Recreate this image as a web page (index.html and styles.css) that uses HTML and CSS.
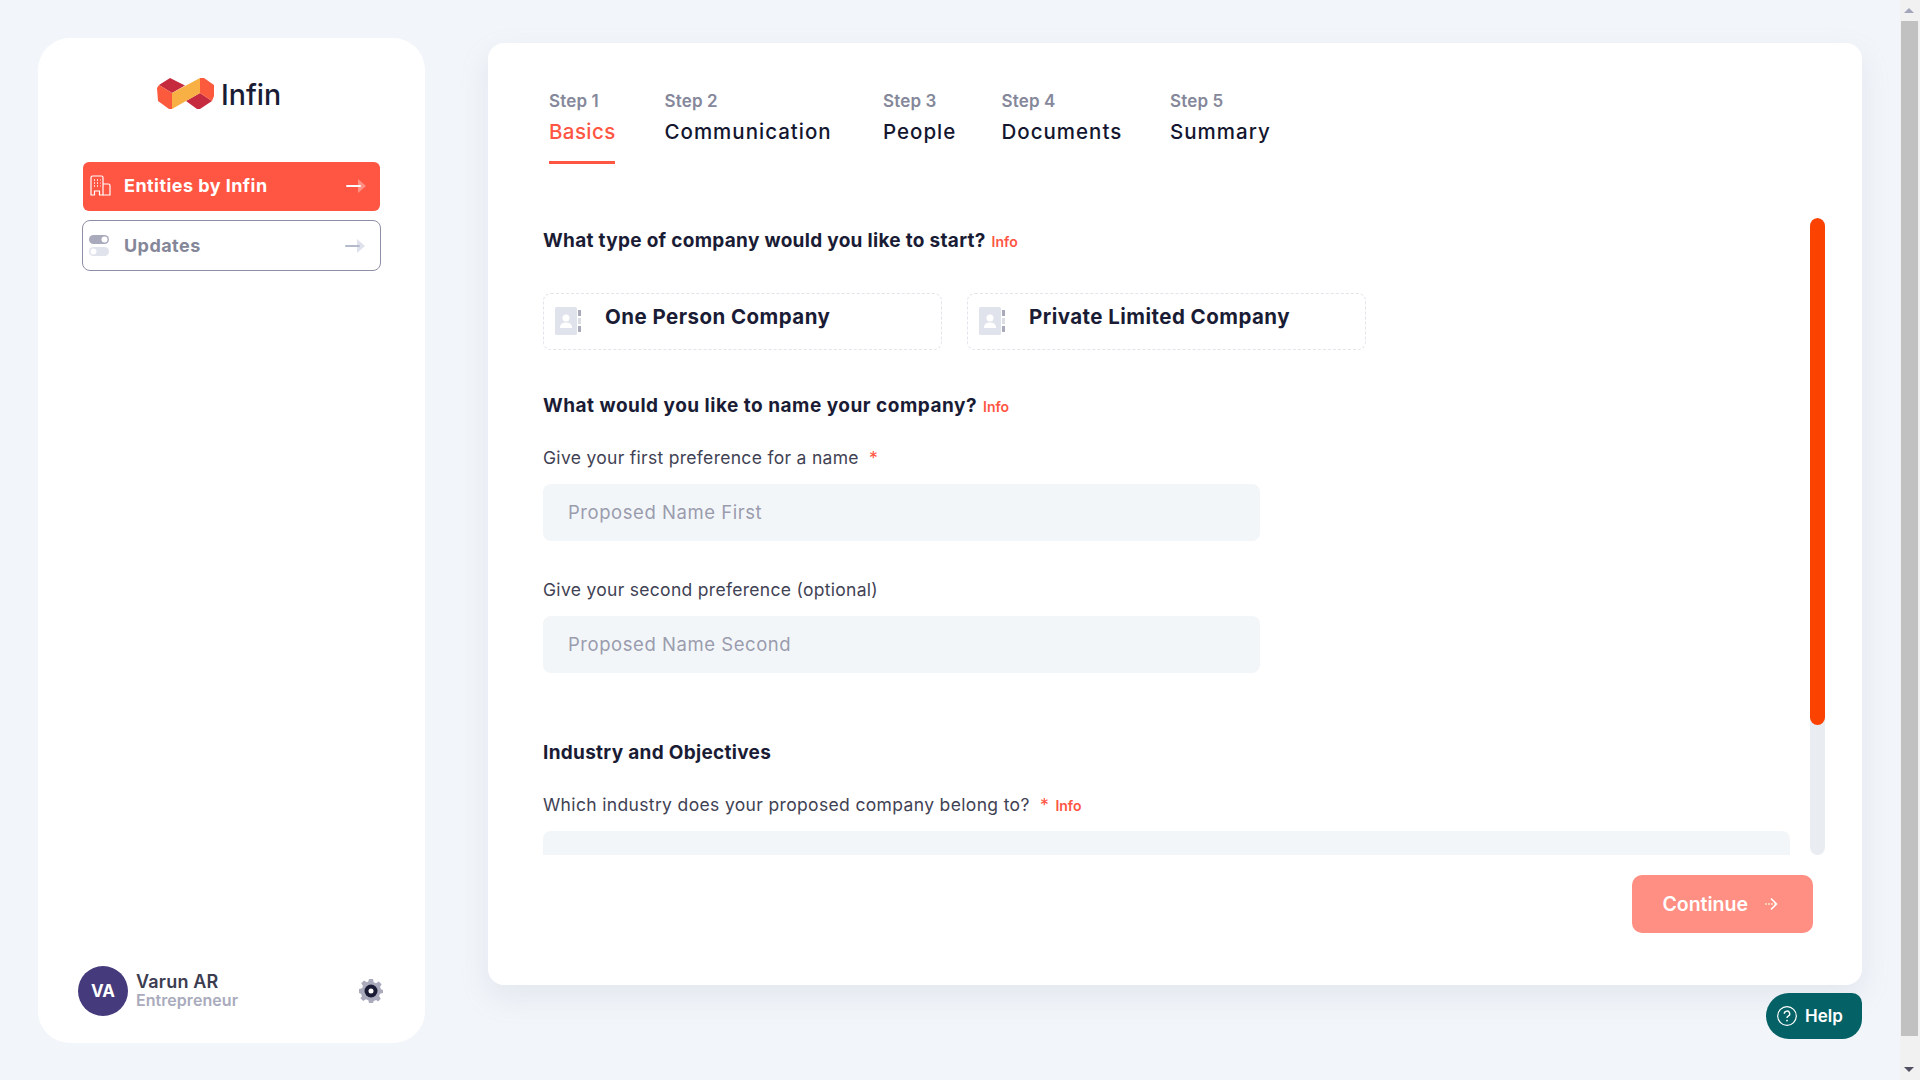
FILE: index.html
```html
<!DOCTYPE html>
<html lang="en">
<head>
<meta charset="utf-8">
<title>Infin</title>
<link rel="stylesheet" href="styles.css">
</head>
<body>
<div class="page">
  <aside class="sidebar">
    <div class="logo">
      <svg class="logo-mark" viewBox="0 0 57 31" width="57" height="31">
        <polygon fill="#c62a3f" points="2,7 13,0 28,7.5 15,15"/>
        <polygon fill="#fb5a3c" points="0,10 2,7 15,15 15,31 12,31 1,23"/>
        <polygon fill="#c62a3f" points="29,23 43,15 55,23 43,31 40,31"/>
        <polygon fill="#f8af43" points="15,15 43,0 43,15 15,31"/>
        <polygon fill="#fb5a3c" points="43,0 47,0 57,7 57,18 55,23 43,15"/>
      </svg>
      <span class="logo-text">Infin</span>
    </div>
    <nav class="nav">
      <a class="nav-item active">
        <svg class="nav-icon" viewBox="0 0 21 21" width="21" height="21" fill="none" stroke="#fff" stroke-width="1.2">
          <path d="M1 20V2.5A1.5 1.5 0 0 1 2.500 1h9A1.500 1.500 0 0 1 13 2.500V20h-3.500v-4h-5v4z"/>
          <path d="M13 9h5.500A1.500 1.500 0 0 1 20 10.500V20h-7"/>
          <path d="M4 5h1M7 5h1M10 5h.5M4 8h1M7 8h1M10 8h.5M4 11h1M7 11h1M10 11h.5" stroke-width="1.500"/>
        </svg>
        <span class="nav-label">Entities by Infin</span>
        <svg class="nav-arrow" viewBox="0 0 20 16" width="20" height="16">
          <path d="M12 1l8 7-8 7z" fill="#fff" opacity=".35"/>
          <rect x="0" y="7" width="15" height="2" rx="1" fill="#fff"/>
        </svg>
      </a>
      <a class="nav-item">
        <svg class="nav-icon" viewBox="0 0 21 21" width="21" height="21">
          <rect x="0" y="0" width="20" height="9" rx="4.500" fill="#a9abbd"/>
          <circle cx="15.500" cy="4.500" r="3" fill="#fff"/>
          <rect x="0" y="12" width="20" height="9" rx="4.500" fill="#e1e3ec"/>
          <circle cx="4.500" cy="16.500" r="3" fill="#fff"/>
        </svg>
        <span class="nav-label">Updates</span>
        <svg class="nav-arrow" viewBox="0 0 20 16" width="20" height="16">
          <path d="M12 1l8 7-8 7z" fill="#dfe2ec"/>
          <rect x="0" y="7" width="15" height="2" rx="1" fill="#b5b9cc"/>
        </svg>
      </a>
    </nav>
    <div class="user">
      <div class="avatar">VA</div>
      <div class="user-text">
        <div class="user-name">Varun AR</div>
        <div class="user-role">Entrepreneur</div>
      </div>
      <svg class="gear" viewBox="0 0 24 24" width="24" height="24">
        <path fill="#a9abbd" d="M10 0h4l.7 3.200 2.300 1 2.800-1.800 2.800 2.800L21 8l1 2.300 2 .7v3l-3 .7-1 2.300 1.800 2.800-2.800 2.800L17.200 21l-2.500 1-.7 2h-4l-.7-2.800-2.300-1-2.800 1.800-2.800-2.800L3 17.200 2 14.700 0 14v-4l3-.7 1-2.300-1.800-2.800L5 1.400 7.800 3.200l1.500-.6z"/>
        <circle cx="12" cy="12" r="6.500" fill="#1a1c35"/>
        <circle cx="12" cy="12" r="2.500" fill="#fff"/>
      </svg>
    </div>
  </aside>

  <main class="panel">
    <div class="tabs">
      <div class="tab current"><span class="tab-step">Step 1</span><span class="tab-name">Basics</span></div>
      <div class="tab"><span class="tab-step">Step 2</span><span class="tab-name">Communication</span></div>
      <div class="tab"><span class="tab-step">Step 3</span><span class="tab-name">People</span></div>
      <div class="tab"><span class="tab-step">Step 4</span><span class="tab-name">Documents</span></div>
      <div class="tab"><span class="tab-step">Step 5</span><span class="tab-name">Summary</span></div>
    </div>

    <div class="form-area">
      <form class="form">
        <h2 class="heading first">What type of company would you like to start? <span class="info">Info</span></h2>
        <div class="choices">
          <div class="choice">
            <svg class="choice-icon" viewBox="0 0 26 28" width="26" height="28">
              <rect x="0" y="0" width="22" height="28" rx="1.500" fill="#e1e3ec"/>
              <circle cx="11" cy="11" r="3.500" fill="#fff"/>
              <path d="M5 21c0-4 2.500-5.500 6-5.500s6 1.500 6 5.500z" fill="#fff"/>
              <rect x="23" y="3" width="3" height="6" fill="#a9abbd"/>
              <rect x="23" y="11" width="3" height="6" fill="#dcdee6"/>
              <rect x="23" y="19" width="3" height="6" fill="#a9abbd"/>
            </svg>
            <span class="choice-label">One Person Company</span>
          </div>
          <div class="choice">
            <svg class="choice-icon" viewBox="0 0 26 28" width="26" height="28">
              <rect x="0" y="0" width="22" height="28" rx="1.500" fill="#e1e3ec"/>
              <circle cx="11" cy="11" r="3.500" fill="#fff"/>
              <path d="M5 21c0-4 2.500-5.500 6-5.500s6 1.500 6 5.500z" fill="#fff"/>
              <rect x="23" y="3" width="3" height="6" fill="#a9abbd"/>
              <rect x="23" y="11" width="3" height="6" fill="#dcdee6"/>
              <rect x="23" y="19" width="3" height="6" fill="#a9abbd"/>
            </svg>
            <span class="choice-label">Private Limited Company</span>
          </div>
        </div>
        <h2 class="heading name">What would you like to name your company? <span class="info">Info</span></h2>
        <label class="label first-label">Give your first preference for a name <span class="req">*</span></label>
        <input class="input" type="text" placeholder="Proposed Name First">
        <label class="label second-label">Give your second preference (optional)</label>
        <input class="input" type="text" placeholder="Proposed Name Second">
        <h2 class="heading industry">Industry and Objectives</h2>
        <label class="label industry-label">Which industry does your proposed company belong to? <span class="req">*</span> <span class="info">Info</span></label>
        <div class="select"></div>
      </form>
      <div class="track"><div class="thumb"></div></div>
    </div>

    <div class="actions">
      <button class="continue" type="button">Continue
        <svg viewBox="0 0 14 14" width="14" height="14" fill="none" stroke="#fff" stroke-width="1.600">
          <path d="M1 7h11" stroke="#ffe3c9" stroke-dasharray="2 1"/>
          <path d="M7 1.500L12.500 7 7 12.500"/>
        </svg>
      </button>
    </div>
  </main>

  <div class="scrollbar">
    <div class="sb-btn"><span class="sb-up"></span></div>
    <div class="sb-thumb"></div>
    <div class="sb-rest"></div>
    <div class="sb-btn"><span class="sb-down"></span></div>
  </div>

  <button class="help" type="button">
    <svg viewBox="0 0 20 20" width="20" height="20" fill="none" stroke="#fff" stroke-width="1.200">
      <circle cx="10" cy="10" r="9.300"/>
      <path d="M7.300 7.800a2.700 2.700 0 1 1 3.900 2.400c-.8.400-1.200.9-1.200 1.800" stroke-width="1.400"/>
      <circle cx="10" cy="14.600" r=".9" fill="#fff" stroke="none"/>
    </svg>
    Help
  </button>
</div>
</body>
</html>
```
FILE: styles.css
```css
* { box-sizing: border-box; }
html, body { margin: 0; padding: 0; height: 100%; overflow: hidden; }
body { background: #f2f5f9; font-family: Inter, "Liberation Sans", sans-serif; color: #1a1c35; }
.page { position: relative; display: flex; align-items: flex-start; width: 1920px; height: 1080px; }

/* Sidebar */
.sidebar {
  display: flex; flex-direction: column;
  width: 387px; height: 1005px; margin: 38px 0 0 38px;
  padding: 40px 42px 27px 40px;
  background: #fff; border-radius: 32px;
}
.logo { display: flex; align-items: center; gap: 7px; padding-left: 79px; height: 31px; }
.logo-text { padding-top: 2px; font-size: 28.500px; font-weight: 500; }
.nav { display: flex; flex-direction: column; gap: 9px; margin-top: 53px; padding-left: 4px; width: 303px; }
.nav-item {
  display: flex; align-items: center; height: 51px; padding: 0 15px 0 6px;
  border: 1px solid #8d8fa5; border-radius: 8px; color: #858799;
  font-size: 18px; font-weight: 700; letter-spacing: .45px;
}
.nav-item.active { height: 49px; margin: 0 1px; padding: 0 14px 2px 7px; background: #ff5543; border: 0; border-radius: 6px; color: #fff; }
.nav-icon { flex: none; }
.nav-label { flex: 1; margin-left: 14px; }
.nav-item.active .nav-label { margin-left: 13px; }
.user { display: flex; align-items: center; margin-top: auto; }
.avatar {
  display: flex; align-items: center; justify-content: center; flex: none;
  width: 50px; height: 50px; border-radius: 50%;
  background: #443a7c; color: #fff; font-size: 17px; font-weight: 700;
}
.user-text { flex: 1; margin-left: 8px; }
.user-name { font-size: 18px; line-height: 18px; font-weight: 600; letter-spacing: .2px; color: #3c3d50; }
.user-role { font-size: 16px; line-height: 18px; font-weight: 600; letter-spacing: .05px; color: #a9abbd; }
.gear { flex: none; }

/* Main panel */
.panel {
  width: 1374px; height: 942px; margin: 43px 0 0 63px;
  padding: 47px 37px 0 55px;
  background: #fff; border-radius: 16px;
  box-shadow: 0 12px 28px rgba(160, 170, 200, .18);
}
.tabs {
  display: grid; grid-template-columns: 66px 169px 69px 119px 103px; column-gap: 49.500px;
  margin-left: 6px; width: max-content;
}
.tab { display: flex; flex-direction: column; height: 74px; }
.tab-step { font-size: 17px; line-height: 22px; font-weight: 600; letter-spacing: .15px; color: #85879a; }
.tab-name { margin-top: 5px; font-size: 20.500px; line-height: 30px; font-weight: 500; letter-spacing: 1px; white-space: nowrap; color: #14162f; }
.tab.current { border-bottom: 3px solid #ff5543; }
.tab.current .tab-name { color: #ff5543; letter-spacing: .4px; }

.form-area { display: flex; gap: 20px; height: 637px; margin-top: 54px; }
.form { flex: 1; min-width: 0; height: 637px; padding-top: 10px; overflow: hidden; }
.heading { margin: 0; font-size: 19px; line-height: 26px; font-weight: 700; letter-spacing: .3px; color: #1a1c35; }
.info { font-size: 14px; font-weight: 600; letter-spacing: 0; color: #ff5543; margin-left: 1px; }
.choices { display: flex; gap: 25px; margin-top: 38px; }
.choice {
  display: flex; align-items: flex-start; width: 399px; height: 57px;
  padding: 13px 0 0 11px;
  border: 1px dashed #e2e4ea; border-radius: 8px;
}
.choice-icon { flex: none; }
.choice-label { margin-left: 24px; margin-top: -3px; font-size: 20.500px; line-height: 26px; font-weight: 700; letter-spacing: .45px; }
.heading.name { margin-top: 43px; letter-spacing: .5px; }
.heading.industry { margin-top: 67px; letter-spacing: .3px; }
.label { display: block; font-size: 17.500px; line-height: 26px; letter-spacing: .3px; color: #3f4254; font-weight: 400; }
.first-label { margin-top: 25px; }
.second-label { margin-top: 36px; }
.industry-label { margin-top: 26px; letter-spacing: .35px; }
.req { color: #ff5543; margin-left: 5px; }
.input {
  display: block; width: 717px; height: 57px; margin-top: 13px; padding: 0 25px 1px;
  background: #f3f6f9; border: 0; border-radius: 8px; outline: 0;
  font: 400 18.500px Inter, "Liberation Sans", sans-serif; letter-spacing: .55px; color: #1a1c35;
}
.input::placeholder { color: #9a9cae; opacity: 1; }
.select { height: 56px; margin-top: 12px; background: #f3f6f9; border-radius: 8px; }
.track { flex: none; width: 15px; height: 637px; background: #e9edf2; border-radius: 8px; overflow: hidden; }
.thumb { height: 507px; background: #fb4200; border-radius: 8px; }

.actions { display: flex; justify-content: flex-end; margin-top: 20px; padding-right: 12px; }
.continue {
  display: flex; align-items: center; gap: 16px; height: 58px; padding: 0 35px 0 30px;
  background: #ff8e83; border: 0; border-radius: 10px; color: #fff;
  font: 600 19.500px Inter, "Liberation Sans", sans-serif;
}

/* Window scrollbar */
.scrollbar { display: flex; flex-direction: column; flex: none; width: 20px; height: 1080px; margin-left: 38px; background: #f1f1f1; }
.sb-btn { display: flex; align-items: center; justify-content: center; flex: none; height: 21px; padding-right: 2px; }
.sb-up { border: 5px solid transparent; border-top: 0; border-bottom: 5px solid #a3a5ba; }
.sb-down { border: 5px solid transparent; border-bottom: 0; border-top: 5px solid #505061; }
.sb-thumb { flex: none; height: 1015px; margin: 0 2px 0 1px; background: #c1c1c1; }
.sb-rest { flex: 1; }

.help {
  position: absolute; left: 1766px; top: 993px;
  display: flex; align-items: center; gap: 8px; width: 96px; height: 46px; padding: 0 0 0 11px;
  background: #046165; border: 0; border-radius: 23px 10px 20px 23px; color: #fff;
  font: 600 17px Inter, "Liberation Sans", sans-serif;
}
```
